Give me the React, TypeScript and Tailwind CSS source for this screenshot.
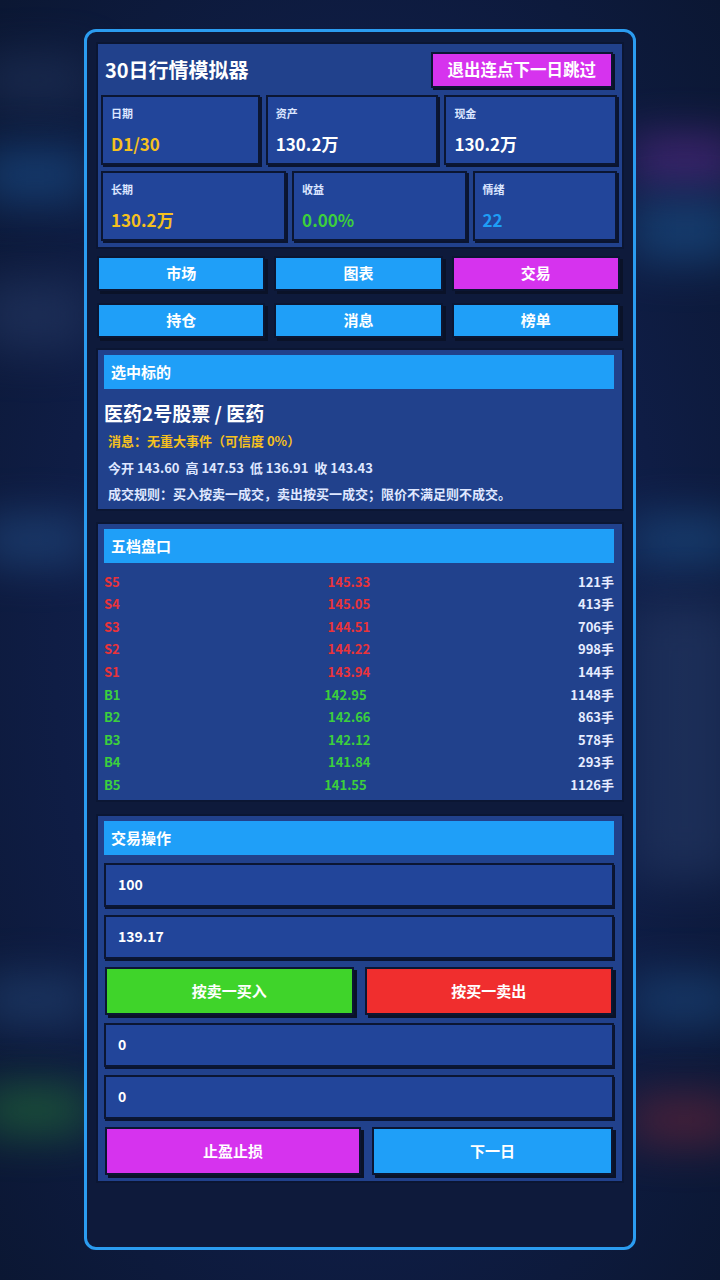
import React from "react";

const font = { fontFamily: '"Noto Sans CJK SC", "Noto Sans", sans-serif' };

const book = [
  { k: "S5", p: "145.33", v: "121手" },
  { k: "S4", p: "145.05", v: "413手" },
  { k: "S3", p: "144.51", v: "706手" },
  { k: "S2", p: "144.22", v: "998手" },
  { k: "S1", p: "143.94", v: "144手" },
  { k: "B1", p: "142.95", v: "1148手" },
  { k: "B2", p: "142.66", v: "863手" },
  { k: "B3", p: "142.12", v: "578手" },
  { k: "B4", p: "141.84", v: "293手" },
  { k: "B5", p: "141.55", v: "1126手" },
];

function Stat({ label, value, color }: { label: string; value: string; color: string }) {
  return (
    <div className="flex-auto h-[70px] bg-[#22459a] border-2 border-[#0b1633] shadow-[2px_2px_0_#0a1430] px-[8px] pt-[6px]">
      <div className="text-[11px] font-bold text-[#dce6ff] leading-[20px]">{label}</div>
      <div className={`text-[17px] font-bold leading-[24px] mt-[9px] ${color}`}>{value}</div>
    </div>
  );
}

function Tab({ label, active }: { label: string; active?: boolean }) {
  return (
    <div
      className={`flex-1 h-[35px] flex items-center justify-center text-[15px] font-bold text-white border-2 border-[#0b1633] shadow-[3px_3px_0_#0a1228] ${
        active ? "bg-[#d633ee]" : "bg-[#1f9ff8]"
      }`}
    >
      {label}
    </div>
  );
}

function Bar({ title }: { title: string }) {
  return (
    <div className="h-[34px] bg-[#1f9ff8] flex items-center px-[7px] text-[15px] font-bold text-white">
      {title}
    </div>
  );
}

function Field({ value }: { value: string }) {
  return (
    <div className="h-[44px] bg-[#22459a] border-2 border-[#0b1633] shadow-[1px_2px_0_#0a1430] flex items-center px-[12px] text-[14px] font-bold text-white">
      {value}
    </div>
  );
}

function Btn({ label, color }: { label: string; color: string }) {
  return (
    <div
      className={`flex-auto h-[48px] flex items-center justify-center text-[15px] font-bold text-white border-2 border-[#0b1633] shadow-[3px_3px_0_#0a1228] ${color}`}
    >
      {label}
    </div>
  );
}

function Backdrop() {
  return (
    <div className="absolute inset-0 overflow-hidden bg-[#0f1d45]">
      <div className="absolute inset-0 bg-[radial-gradient(ellipse_at_center,#15285a_0%,#0f1d45_60%,#0b1733_100%)]" />
      <div className="absolute left-[-20px] top-[60px] w-[110px] h-[40px] bg-[#23365e] blur-xl opacity-70" />
      <div className="absolute left-[-20px] top-[150px] w-[110px] h-[50px] bg-[#1a4f8c] blur-xl opacity-70" />
      <div className="absolute left-[-20px] top-[280px] w-[110px] h-[70px] bg-[#263a66] blur-xl opacity-60" />
      <div className="absolute left-[-20px] top-[520px] w-[110px] h-[40px] bg-[#24528c] blur-xl opacity-70" />
      <div className="absolute left-[-20px] top-[980px] w-[110px] h-[40px] bg-[#254a7c] blur-xl opacity-70" />
      <div className="absolute left-[-20px] top-[1090px] w-[110px] h-[40px] bg-[#237038] blur-xl opacity-80" />
      <div className="absolute right-[-20px] top-[140px] w-[110px] h-[40px] bg-[#5a2a8c] blur-xl opacity-80" />
      <div className="absolute right-[-20px] top-[200px] w-[110px] h-[60px] bg-[#1a508a] blur-xl opacity-70" />
      <div className="absolute right-[-20px] top-[520px] w-[110px] h-[40px] bg-[#1e5690] blur-xl opacity-70" />
      <div className="absolute right-[-20px] top-[600px] w-[110px] h-[280px] bg-[#253a66] blur-xl opacity-60" />
      <div className="absolute right-[-20px] top-[980px] w-[110px] h-[40px] bg-[#1d5088] blur-xl opacity-70" />
      <div className="absolute right-[-20px] top-[1100px] w-[110px] h-[40px] bg-[#6a2438] blur-xl opacity-80" />
    </div>
  );
}

export default function App() {
  return (
    <div className="relative w-[720px] h-[1280px] overflow-hidden" style={font}>
      <Backdrop />
      <div className="relative w-[552px] h-[1221px] mx-auto mt-[29px] border-[3px] border-[#2b9cf0] rounded-[12px] bg-[#0e1a3b] px-[9px] pt-[10px] flex flex-col">
        {/* header */}
        <div className="bg-[#21418c] border-2 border-[#0b1633] pl-[3px] pr-[5px] pb-[6px]">
          <div className="h-[51px] flex items-center justify-between pl-[4px] pr-[4px]">
            <div className="text-[20px] font-bold text-white">30日行情模拟器</div>
            <div className="h-[36px] px-[15px] flex items-center bg-[#d633ee] border-2 border-[#0b1633] shadow-[2px_2px_0_#0a1228] text-[16.5px] font-bold text-white">
              退出连点下一日跳过
            </div>
          </div>
          <div className="flex gap-[6px]">
            <Stat label="日期" value="D1/30" color="text-[#f5c01e]" />
            <Stat label="资产" value="130.2万" color="text-white" />
            <Stat label="现金" value="130.2万" color="text-white" />
          </div>
          <div className="flex gap-[6px] mt-[6px]">
            <Stat label="长期" value="130.2万" color="text-[#f5c01e]" />
            <Stat label="收益" value="0.00%" color="text-[#3ccf3c]" />
            <Stat label="情绪" value="22" color="text-[#1e9ef5]" />
          </div>
        </div>

        {/* tabs */}
        <div className="flex gap-[9px] mt-[7px] pl-[1px] pr-[4px]">
          <Tab label="市场" />
          <Tab label="图表" />
          <Tab label="交易" active />
        </div>
        <div className="flex gap-[9px] mt-[12px] pl-[1px] pr-[4px]">
          <Tab label="持仓" />
          <Tab label="消息" />
          <Tab label="榜单" />
        </div>

        {/* selected */}
        <div className="mt-[10px] bg-[#21418c] border-2 border-[#0b1633] pl-[6px] pr-[8px] pt-[5px] pb-[4px]">
          <Bar title="选中标的" />
          <div className="text-[19px] font-bold text-white mt-[11px] leading-[26px]">医药2号股票 / 医药</div>
          <div className="text-[13px] font-bold text-[#f5c01e] mt-[4px] pl-[4px] leading-[22px]">
            消息：无重大事件（可信度 0%）
          </div>
          <div className="text-[13px] font-bold text-[#dfe7ff] mt-[5px] pl-[4px] leading-[22px]">
            今开 143.60&nbsp; 高 147.53&nbsp; 低 136.91&nbsp; 收 143.43
          </div>
          <div className="text-[13px] font-bold text-[#dfe7ff] mt-[4px] pl-[4px] leading-[22px]">
            成交规则：买入按卖一成交，卖出按买一成交；限价不满足则不成交。
          </div>
        </div>

        {/* order book */}
        <div className="mt-[11px] bg-[#21418c] border-2 border-[#0b1633] pl-[6px] pr-[8px] pt-[5px] pb-[4px]">
          <Bar title="五档盘口" />
          <div className="mt-[7px]">
            {book.map((r) => {
              const c = r.k.startsWith("S") ? "text-[#ea3339]" : "text-[#3ccf3c]";
              return (
                <div key={r.k} className="h-[22.6px] flex items-center justify-between text-[13px] font-bold">
                  <span className={c}>{r.k}</span>
                  <span className={c}>{r.p}</span>
                  <span className="text-[#e6ecff]">{r.v}</span>
                </div>
              );
            })}
          </div>
        </div>

        {/* trade */}
        <div className="mt-[12px] bg-[#21418c] border-2 border-[#0b1633] pl-[6px] pr-[8px] pt-[5px] pb-[6px] flex flex-col gap-[8px]">
          <Bar title="交易操作" />
          <Field value="100" />
          <Field value="139.17" />
          <div className="flex gap-[11px] px-[1px]">
            <Btn label="按卖一买入" color="bg-[#3fd42a]" />
            <Btn label="按买一卖出" color="bg-[#f02e2e]" />
          </div>
          <Field value="0" />
          <Field value="0" />
          <div className="flex gap-[11px] px-[1px]">
            <Btn label="止盈止损" color="bg-[#d633ee]" />
            <Btn label="下一日" color="bg-[#1f9ff8]" />
          </div>
        </div>
      </div>
    </div>
  );
}
